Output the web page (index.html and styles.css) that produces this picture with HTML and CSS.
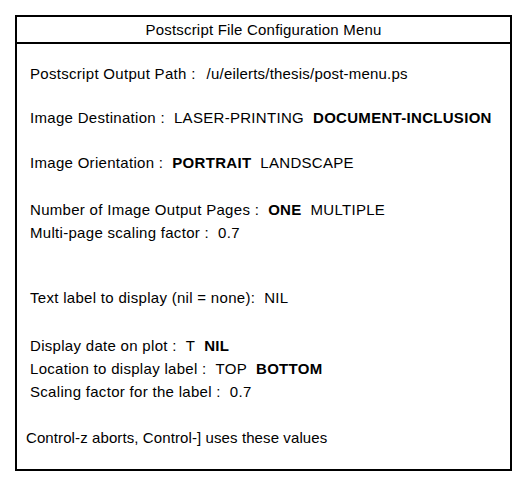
FILE: index.html
```html
<!DOCTYPE html>
<html lang="en">
<head>
  <meta charset="UTF-8" />
  <title>Postscript File Configuration Menu</title>
  <link rel="stylesheet" href="styles.css">
</head>
<body>
  <div class="menu">
    <div class="menu-title">Postscript File Configuration Menu</div>
    <div class="menu-body">
      <div class="row r-path">Postscript Output Path :<span class="val">/u/eilerts/thesis/post-menu.ps</span></div>
      <div class="row r-dest">Image Destination :<span class="val">LASER-PRINTING</span><span class="val on">DOCUMENT-INCLUSION</span></div>
      <div class="row r-orient">Image Orientation :<span class="val on">PORTRAIT</span><span class="val">LANDSCAPE</span></div>
      <div class="row r-pages">Number of Image Output Pages :<span class="val on">ONE</span><span class="val">MULTIPLE</span></div>
      <div class="row">Multi-page scaling factor :<span class="val">0.7</span></div>
      <div class="row r-label">Text label to display (nil = none):<span class="val">NIL</span></div>
      <div class="row r-date">Display date on plot :<span class="val">T</span><span class="val on">NIL</span></div>
      <div class="row">Location to display label :<span class="val">TOP</span><span class="val on">BOTTOM</span></div>
      <div class="row">Scaling factor for the label :<span class="val">0.7</span></div>
      <div class="row r-help">Control-z aborts, Control-] uses these values</div>
    </div>
  </div>
</body>
</html>
```

FILE: styles.css
```css
* { box-sizing: border-box; margin: 0; padding: 0; }

body {
  background: #fff;
  color: #000;
  font-family: "Liberation Sans", Arial, sans-serif;
  font-size: 15px;
  letter-spacing: 0.3px;
  padding: 15px 0 0 15px;
}

.menu {
  width: 497px;
  height: 456px;
  border: 2px solid #000;
  display: flex;
  flex-direction: column;
}

.menu-title {
  height: 27px;
  line-height: 25px;
  text-align: center;
  letter-spacing: 0.2px;
  border-bottom: 2px solid #000;
}

.menu-body {
  display: flex;
  flex-direction: column;
  padding: 18px 0 0 13px;
}

.row {
  line-height: 23px;
  white-space: nowrap;
}

.val {
  margin-left: 9px;
}

.val.on {
  font-weight: bold;
}

.r-path .val { margin-left: 11px; letter-spacing: 0.2px; }
.r-dest { margin-top: 21px; }
.r-orient { margin-top: 22px; }
.r-pages { margin-top: 24px; }
.r-label { margin-top: 42px; }
.r-date { margin-top: 25px; }
.r-help { margin-top: 23px; margin-left: -4px; letter-spacing: 0.1px; }
```
